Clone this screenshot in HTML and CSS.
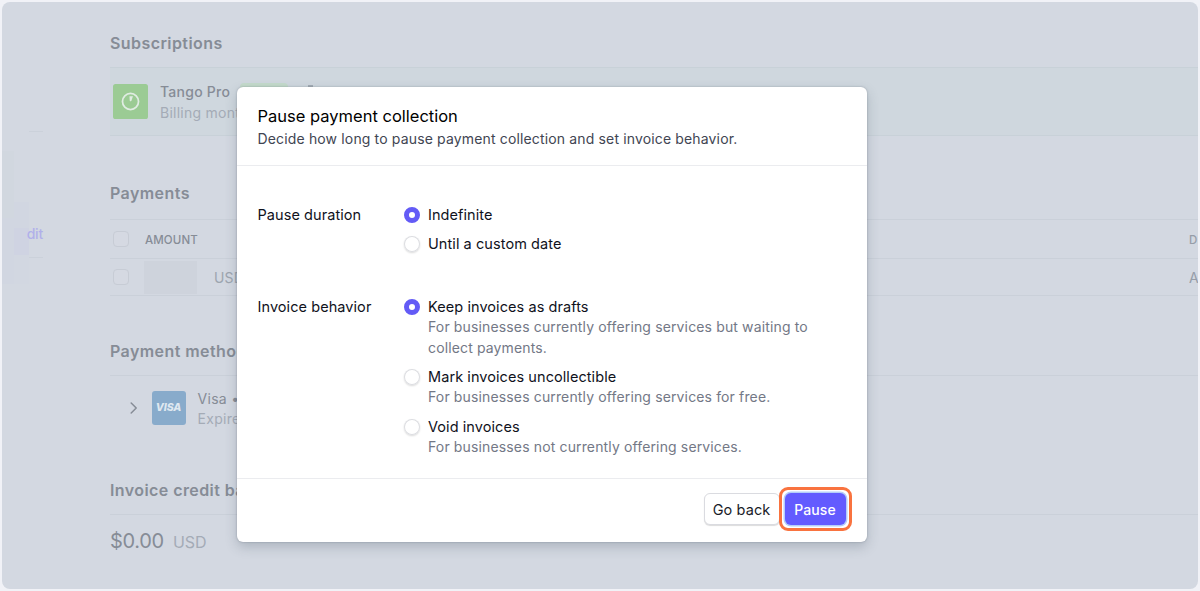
FILE: index.html
```html
<!DOCTYPE html>
<html lang="en">
<head>
<meta charset="utf-8">
<title>Pause payment collection</title>
<link rel="stylesheet" href="styles.css">
</head>
<body>
<div class="frame">
  <aside class="sidebar">
    <div class="side-redaction">
      <span class="block block-outer"></span>
      <span class="block block-inner"></span>
    </div>
    <div class="side-panel"><a class="side-link">dit</a></div>
  </aside>
  <main class="content">
    <section class="section subscriptions">
      <h2>Subscriptions</h2>
      <div class="subscription-row">
        <svg class="product-icon" viewBox="0 0 34 34"><rect width="34" height="34" rx="2.5" fill="#9bcb94"/><circle cx="17" cy="17" r="7.8" fill="none" stroke="#e0ece3" stroke-width="1.7"/><path d="M16 12h3.4l-1.5 4.2q-.9 1-1.6 0z" fill="#e0ece3"/></svg>
        <div class="product-text">
          <div class="product-name">Tango Pro</div>
          <div class="muted product-billing">Billing monthly</div>
        </div>
        <span class="status-badge"></span><span class="status-detail"></span>
      </div>
    </section>
    <section class="section payments">
      <h2>Payments</h2>
      <div class="table-row table-head"><span class="checkbox"></span><span class="amount-label">AMOUNT</span><span class="last-col">D</span></div>
      <div class="table-row table-body"><span class="checkbox"></span><span class="redacted"></span><span class="currency">USD</span><span class="last-col">A</span></div>
    </section>
    <section class="section methods">
      <h2>Payment methods</h2>
      <div class="method-row">
        <svg class="chevron" viewBox="0 0 8 12"><path d="M1.2 1l5 5-5 5" fill="none" stroke="#868c96" stroke-width="1.5" stroke-linecap="round" stroke-linejoin="round"/></svg>
        <span class="visa">VISA</span>
        <div class="method-text">
          <div class="method-name">Visa •</div>
          <div class="muted">Expires</div>
        </div>
      </div>
    </section>
    <section class="section credit">
      <h2>Invoice credit balance</h2>
      <div class="balance"><span class="balance-amount">$0.00</span><span class="balance-unit">USD</span></div>
    </section>
  </main>
</div>

<div class="modal" role="dialog">
  <header class="modal-head">
    <h1>Pause payment collection</h1>
    <p>Decide how long to pause payment collection and set invoice behavior.</p>
  </header>
  <div class="modal-body">
    <div class="field">
      <div class="field-label">Pause duration</div>
      <div class="options">
        <label class="option"><span class="radio checked"></span><span class="option-text">Indefinite</span></label>
        <label class="option"><span class="radio"></span><span class="option-text">Until a custom date</span></label>
      </div>
    </div>
    <div class="field">
      <div class="field-label">Invoice behavior</div>
      <div class="options">
        <label class="option"><span class="radio checked"></span><span class="option-text">Keep invoices as drafts<small>For businesses currently offering services but waiting to<br>collect payments.</small></span></label>
        <label class="option"><span class="radio"></span><span class="option-text">Mark invoices uncollectible<small>For businesses currently offering services for free.</small></span></label>
        <label class="option"><span class="radio"></span><span class="option-text">Void invoices<small>For businesses not currently offering services.</small></span></label>
      </div>
    </div>
  </div>
  <footer class="modal-foot">
    <button class="btn">Go back</button>
    <div class="highlight"><button class="btn btn-primary">Pause</button></div>
  </footer>
</div>
</body>
</html>
```
FILE: styles.css
```css
* { box-sizing: border-box; }
html, body { height: 100%; }
body {
  margin: 0;
  padding: 2px;
  background: #f1f2f7;
  font-family: Inter, "Liberation Sans", sans-serif;
  font-size: 14px;
  letter-spacing: 0.15px;
  overflow: hidden;
}
h1, h2, p { margin: 0; }

.frame {
  display: flex;
  width: 1196px;
  height: 587px;
  border-radius: 8px;
  overflow: hidden;
  background: #d3d8e1;
  color: #868c96;
}

/* Sidebar */
.sidebar { flex: 0 0 108px; display: flex; padding-top: 129px; }
.side-redaction { display: grid; grid-template-columns: 12px 15px; width: 27px; height: 153px; }
.block-outer { margin-top: 20px; background: linear-gradient(#d1d7df 50%, #d1d6e1 50%); }
.block-inner { margin-top: 71px; background: linear-gradient(#d1d6e1 26px, #cfd3e2 26px, #cfd3e2 53px, #d2d7e1 53px); }
.side-panel {
  display: flex;
  align-items: flex-end;
  justify-content: flex-end;
  width: 14px;
  height: 127px;
  padding-bottom: 13px;
  border-top: 1px solid #cbd1da;
  border-bottom: 1px solid #cbd1da;
}
.side-link { line-height: 20px; font-size: 14px; font-weight: 500; letter-spacing: -0.2px; color: #b1b0ea; }

/* Page content */
.content { flex: 1; min-width: 0; }
.section h2 { font-size: 16px; font-weight: 600; line-height: 24px; letter-spacing: 0.42px; white-space: nowrap; }
.muted { color: #a4abb6; }
.subscriptions { padding-top: 29px; }
.subscription-row {
  display: flex;
  height: 69px;
  margin-top: 12px;
  padding: 0 3px;
  background: #cfd7de;
  border-top: 1px solid #c8d1d8;
  border-bottom: 1px solid #c8d1d8;
}
.product-icon { width: 35px; height: 35px; margin-top: 16px; }
.product-text { width: 79px; margin: 13px 0 0 12px; line-height: 21px; letter-spacing: 0.25px; white-space: nowrap; }
.product-name { font-weight: 500; }
.status-badge { width: 48px; height: 16px; margin: 15px 0 0 1px; border-radius: 4px; background: #c4dacb; }
.status-detail { width: 5px; height: 2px; margin: 17px 0 0 20px; background: #a4acb5; }

.payments { padding-top: 45px; }
.table-row {
  display: flex;
  align-items: center;
  height: 39px;
  margin-top: 14px;
  padding-left: 3px;
  border-top: 1px solid #cad0d9;
}
.table-body { height: 38px; margin-top: 0; border-bottom: 1px solid #cad0d9; }
.checkbox { width: 16px; height: 16px; border-radius: 4px; border: 1px solid #c7ccd5; background: #d5d9e2; }
.amount-label { margin: 1px 0 0 16px; font-size: 11.5px; font-weight: 500; letter-spacing: 0.1px; }
.redacted { width: 53px; height: 33px; margin-left: 15px; background: #ced3dc; }
.currency { margin-left: 17px; color: #9da5af; }
.last-col { width: 9px; margin-left: auto; overflow: hidden; color: #969da8; }
.table-head .last-col { padding-top: 1px; font-size: 11.5px; font-weight: 500; }

.methods { padding-top: 43px; }
.method-row { display: flex; align-items: center; height: 66px; margin-top: 12px; padding-left: 20px; border-top: 1px solid #cad0d9; }
.chevron { width: 8px; height: 12px; margin-bottom: 1px; }
.visa { display: flex; align-items: center; justify-content: center; width: 34px; height: 34px; margin: 0 0 2px 13.5px; border-radius: 3px; background: #88abcb; color: #dfe8f0; font-size: 10.5px; font-weight: 800; font-style: italic; letter-spacing: -0.1px; }
.method-text { margin-left: 12px; line-height: 20px; letter-spacing: 0.3px; white-space: nowrap; }

.credit { padding-top: 37px; }
.balance { display: flex; align-items: baseline; gap: 9px; height: 54px; margin-top: 12px; border-top: 1px solid #cad0d9; line-height: 52px; }
.balance-amount { font-size: 20px; letter-spacing: -0.3px; }
.balance-unit { font-size: 16px; color: #a4abb6; letter-spacing: 0; }

/* Dialog */
.modal {
  position: absolute;
  left: 236.5px;
  top: 86.5px;
  width: 630px;
  height: 455px;
  display: flex;
  flex-direction: column;
  border-radius: 6px;
  background: #fff;
  color: #10121c;
  box-shadow: 0 0 2px rgba(50, 60, 75, .35), 0 5px 12px rgba(60, 75, 90, .25);
}
.modal-head { flex: none; height: 79px; padding: 17px 21px 0; border-bottom: 1px solid #ebecef; }
.modal-head h1 { color: #000; font-size: 16.5px; font-weight: 400; line-height: 24px; letter-spacing: 0; }
.modal-head p { line-height: 22px; color: #414552; }
.modal-body { flex: 1; padding: 39px 21px 0; }
.field { display: grid; grid-template-columns: 146.5px 1fr; line-height: 20px; font-size: 14.5px; font-weight: 400; letter-spacing: 0.07px; }
.field + .field { margin-top: 43px; }
.options { display: grid; gap: 9.4px; }
.option { display: flex; gap: 8px; }
.radio { flex: none; width: 16px; height: 16px; margin-top: 2px; border-radius: 50%; background: #fff; box-shadow: 0 0 0 1px #dcdde1 inset, 0 1px 2px rgba(0, 0, 0, .15); }
.radio.checked { border: 5px solid #635bf6; box-shadow: none; }
.option-text small { display: block; margin-top: -1px; font-size: 14px; font-weight: 400; line-height: 21px; letter-spacing: 0.14px; color: #737886; }
.modal-foot { flex: none; display: flex; align-items: center; justify-content: flex-end; height: 64px; padding: 0 15px 3px; border-top: 1px solid #ebecef; }
.btn { height: 32px; width: 76px; padding: 1px 0 0; border: 1px solid #dadbe0; border-radius: 6px; background: #fff; color: #1a1c28; font: 400 14.5px Inter, sans-serif; letter-spacing: 0.1px; box-shadow: 0 1px 1px rgba(0, 0, 0, .14); white-space: nowrap; }
.highlight { display: flex; align-items: center; justify-content: center; width: 73px; height: 44px; margin-left: -1px; border: 3px solid #f9733f; border-radius: 9px; background: #fff; }
.btn-primary { width: 61px; height: 32px; border: 0; background: #635bff; color: #fff; font-weight: 500; font-size: 14px; box-shadow: 0 0 0 1.5px #b4cdfa; }
```
